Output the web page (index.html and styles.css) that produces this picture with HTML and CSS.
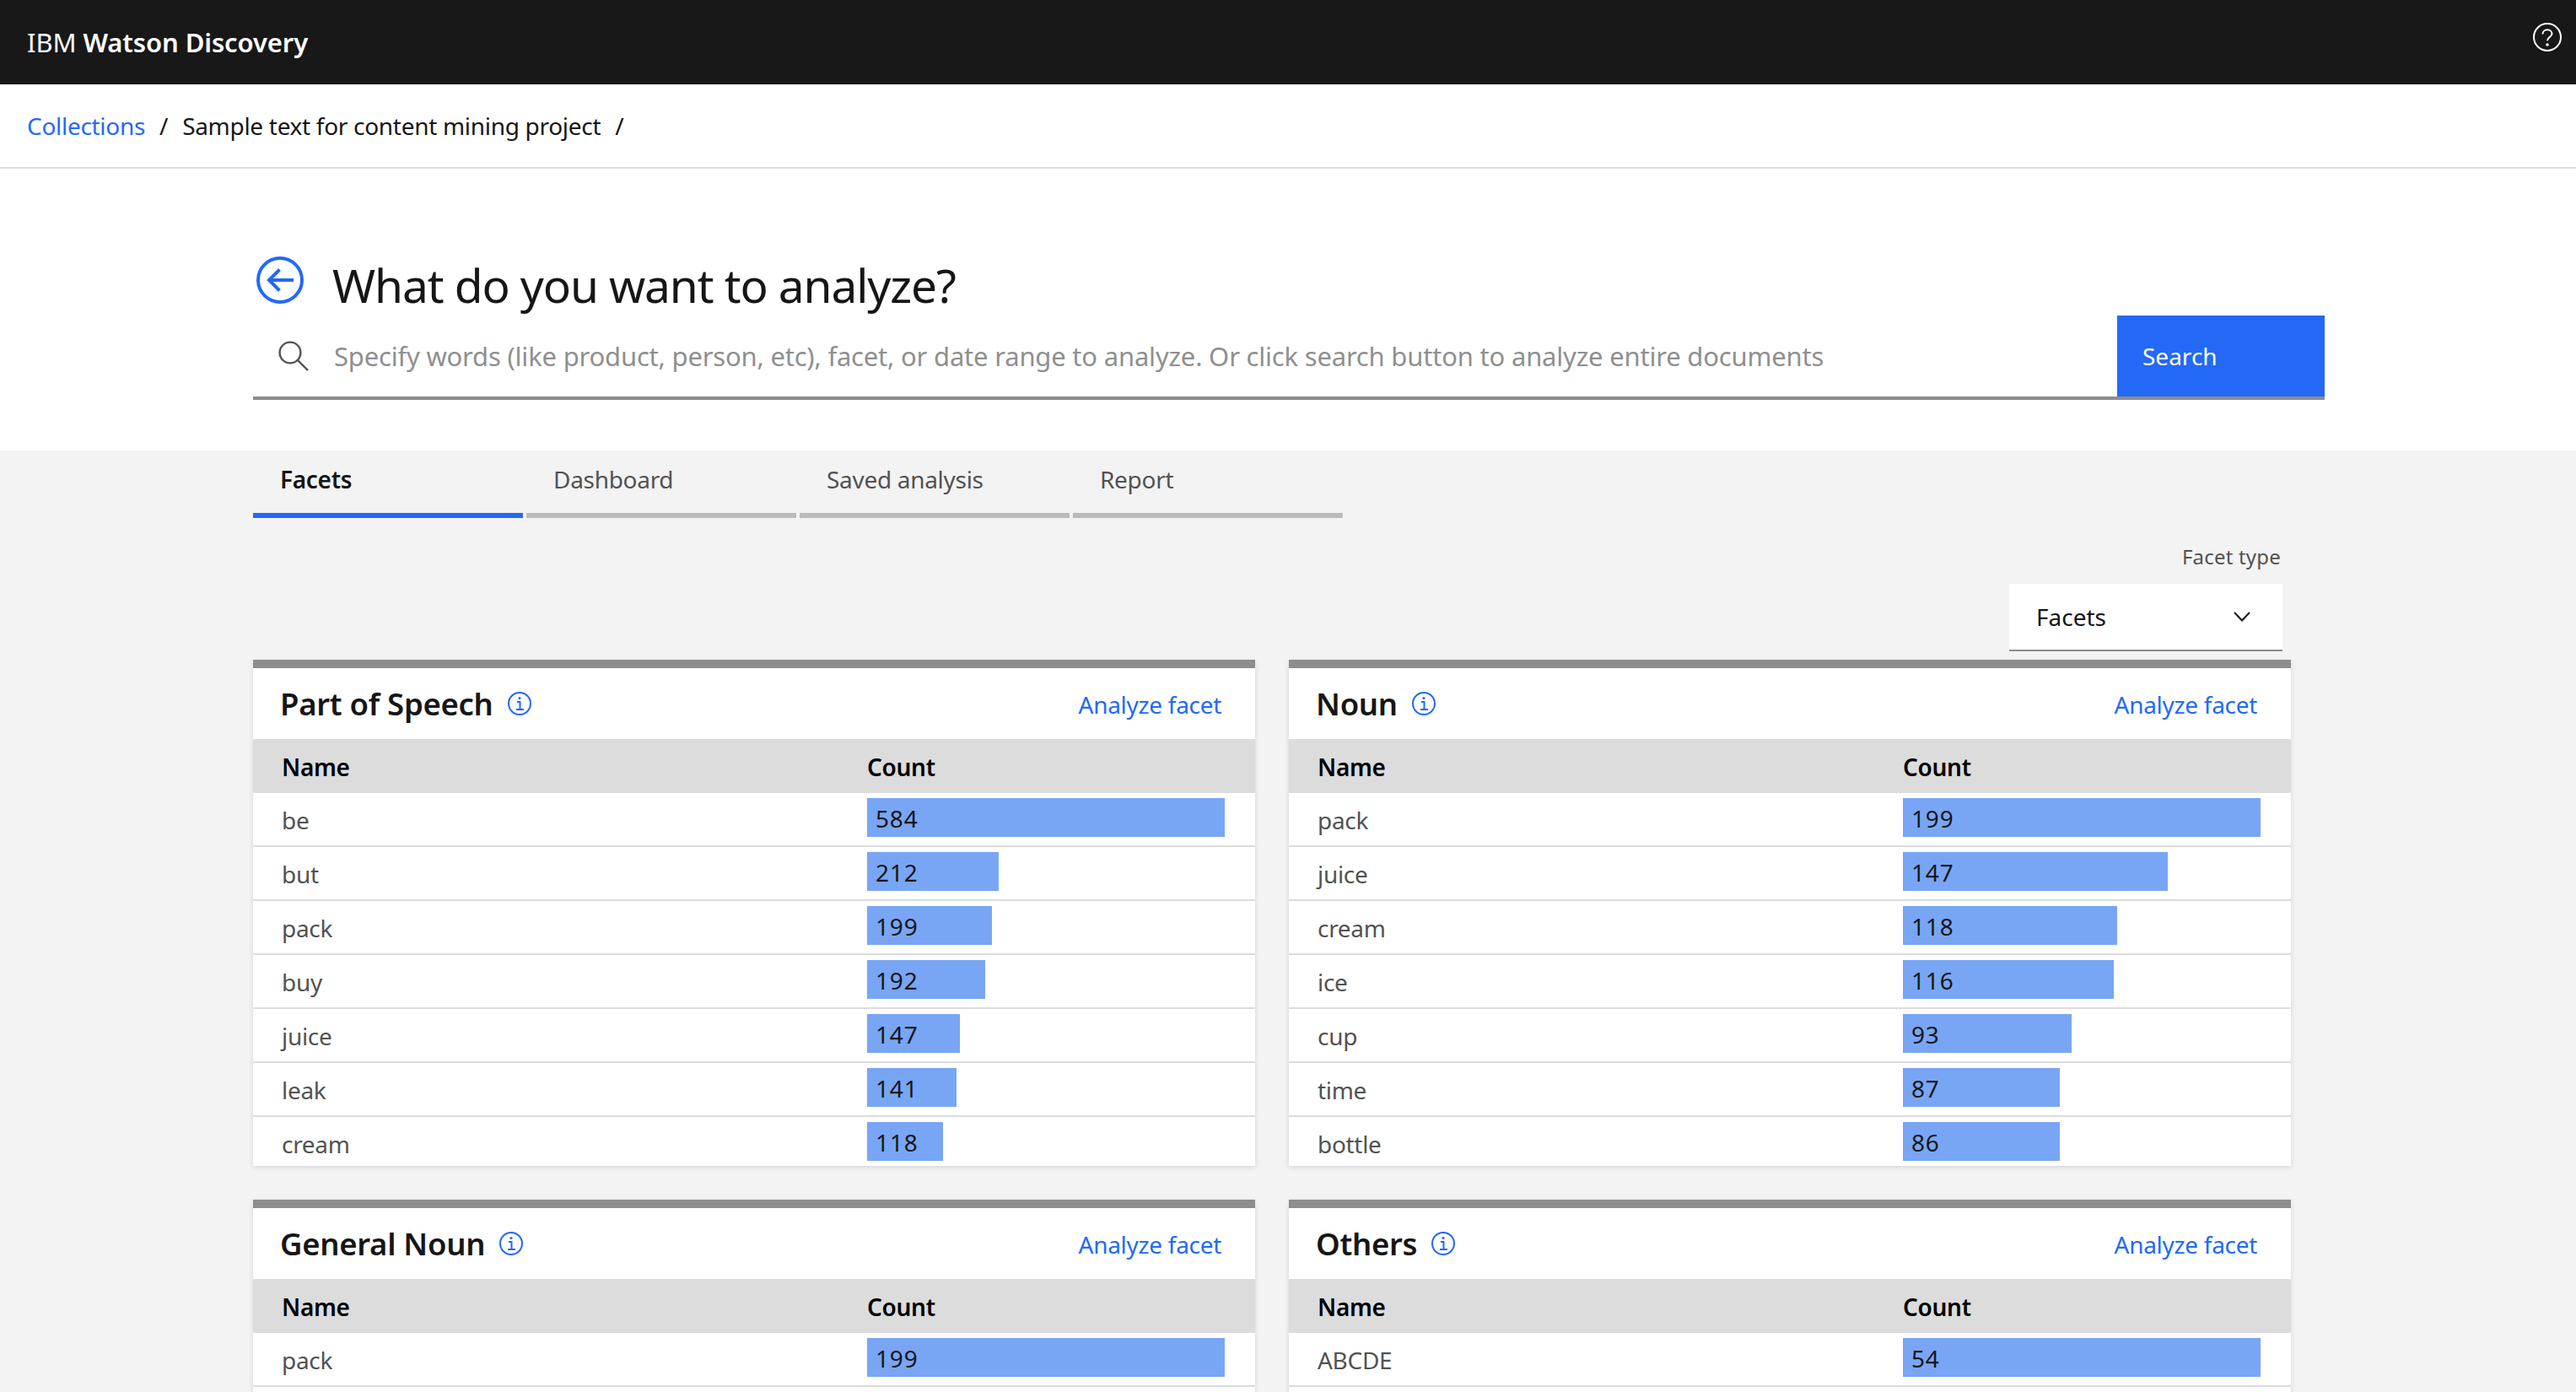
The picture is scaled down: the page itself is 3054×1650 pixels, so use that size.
FILE: index.html
```html
<!DOCTYPE html>
<html lang="en">
<head>
    <meta charset="utf-8">
    <title>IBM Watson Discovery</title>
    <link rel="stylesheet" href="styles.css">
</head>
<body>
<div class="topbar">
    <div class="brand">IBM <b>Watson Discovery</b></div>
    <svg class="help" width="36" height="36" viewBox="0 0 36 36" fill="none" stroke="#fff" stroke-width="2">
        <circle cx="18" cy="18" r="16"/>
        <path d="M12.5 14.5c0-3.2 2.4-5.2 5.5-5.2s5.5 2 5.5 4.8c0 4-5.5 3.6-5.5 8.2"/>
        <circle cx="18" cy="27" r="1.8" fill="#fff" stroke="none"/>
    </svg>
</div>
<div class="crumbs">
    <a href="#">Collections</a><span class="sep">/</span><span>Sample text for content mining project</span><span class="sep">/</span>
</div>
<div class="hero">
    <div class="title_row">
        <svg width="56" height="56" viewBox="0 0 56 56" fill="none" stroke="#2369f6" stroke-width="4">
            <circle cx="28" cy="28" r="26"/>
            <path d="M44 28H15M27.5 15.5L15 28l12.5 12.5"/>
        </svg>
        <h1>What do you want to analyze?</h1>
    </div>
    <div class="search">
        <svg class="search_icon" width="36" height="36" viewBox="0 0 36 36" fill="none" stroke="#525252" stroke-width="2.4">
            <circle cx="14" cy="14" r="12.4"/>
            <path d="M23 23l12 12"/>
        </svg>
        <span class="placeholder">Specify words (like product, person, etc), facet, or date range to analyze. Or click search button to analyze entire documents</span>
        <div class="search_btn">Search</div>
    </div>
</div>
<div class="main">
    <div class="tabs">
        <div class="tab active">Facets</div>
        <div class="tab">Dashboard</div>
        <div class="tab">Saved analysis</div>
        <div class="tab">Report</div>
    </div>
    <div class="filter">
        <div class="filter_label">Facet type</div>
        <div class="select">
            <span>Facets</span>
            <svg width="20" height="12" viewBox="0 0 20 12" fill="none" stroke="#161616" stroke-width="2"><path d="M1 1l9 9.5L19 1"/></svg>
        </div>
    </div>
    <div class="cards">

        <div class="card">
            <div class="card_head">
                <h2>Part of Speech</h2>
                <svg class="info" width="30" height="30" viewBox="0 0 30 30" fill="none" stroke="#2369f6" stroke-width="2"><circle cx="15" cy="15" r="13"/><path d="M12 13h3.5v9M11 22h9"/><circle cx="15" cy="8.5" r="1.6" fill="#2369f6" stroke="none"/></svg>
                <a class="analyze" href="#">Analyze facet</a>
            </div>
            <div class="row thead"><div class="name">Name</div><div>Count</div></div>
            <div class="row"><div class="name">be</div><div class="bar" style="width:424px">584</div></div>
            <div class="row"><div class="name">but</div><div class="bar" style="width:156px">212</div></div>
            <div class="row"><div class="name">pack</div><div class="bar" style="width:148px">199</div></div>
            <div class="row"><div class="name">buy</div><div class="bar" style="width:140px">192</div></div>
            <div class="row"><div class="name">juice</div><div class="bar" style="width:110px">147</div></div>
            <div class="row"><div class="name">leak</div><div class="bar" style="width:106px">141</div></div>
            <div class="row last"><div class="name">cream</div><div class="bar" style="width:90px">118</div></div>
        </div>

        <div class="card">
            <div class="card_head">
                <h2>Noun</h2>
                <svg class="info" width="30" height="30" viewBox="0 0 30 30" fill="none" stroke="#2369f6" stroke-width="2"><circle cx="15" cy="15" r="13"/><path d="M12 13h3.5v9M11 22h9"/><circle cx="15" cy="8.5" r="1.6" fill="#2369f6" stroke="none"/></svg>
                <a class="analyze" href="#">Analyze facet</a>
            </div>
            <div class="row thead"><div class="name">Name</div><div>Count</div></div>
            <div class="row"><div class="name">pack</div><div class="bar" style="width:424px">199</div></div>
            <div class="row"><div class="name">juice</div><div class="bar" style="width:314px">147</div></div>
            <div class="row"><div class="name">cream</div><div class="bar" style="width:254px">118</div></div>
            <div class="row"><div class="name">ice</div><div class="bar" style="width:250px">116</div></div>
            <div class="row"><div class="name">cup</div><div class="bar" style="width:200px">93</div></div>
            <div class="row"><div class="name">time</div><div class="bar" style="width:186px">87</div></div>
            <div class="row last"><div class="name">bottle</div><div class="bar" style="width:186px">86</div></div>
        </div>

        <div class="card">
            <div class="card_head">
                <h2>General Noun</h2>
                <svg class="info" width="30" height="30" viewBox="0 0 30 30" fill="none" stroke="#2369f6" stroke-width="2"><circle cx="15" cy="15" r="13"/><path d="M12 13h3.5v9M11 22h9"/><circle cx="15" cy="8.5" r="1.6" fill="#2369f6" stroke="none"/></svg>
                <a class="analyze" href="#">Analyze facet</a>
            </div>
            <div class="row thead"><div class="name">Name</div><div>Count</div></div>
            <div class="row"><div class="name">pack</div><div class="bar" style="width:424px">199</div></div>
            <div class="row"></div>
        </div>

        <div class="card">
            <div class="card_head">
                <h2>Others</h2>
                <svg class="info" width="30" height="30" viewBox="0 0 30 30" fill="none" stroke="#2369f6" stroke-width="2"><circle cx="15" cy="15" r="13"/><path d="M12 13h3.5v9M11 22h9"/><circle cx="15" cy="8.5" r="1.6" fill="#2369f6" stroke="none"/></svg>
                <a class="analyze" href="#">Analyze facet</a>
            </div>
            <div class="row thead"><div class="name">Name</div><div>Count</div></div>
            <div class="row"><div class="name">ABCDE</div><div class="bar" style="width:424px">54</div></div>
            <div class="row"></div>
        </div>

    </div>
</div>
</body>
</html>
```

FILE: styles.css
```css
html, body{
    margin: 0;
    height: 1650px;
    overflow: hidden;
}
body{
    background-color: #fff;
    color: #161616;
    font-family: "Noto Sans", "Open Sans", sans-serif;
    font-size: 28px;
    letter-spacing: -.3px;
}
a{
    color: #2369f6;
    text-decoration: none;
}

.topbar{
    height: 100px;
    background-color: #181818;
    color: #fff;
    display: flex;
    align-items: center;
    justify-content: space-between;
    padding: 0 16px 0 32px;
}
.brand{
    font-size: 31px;
    letter-spacing: -.1px;
}
.brand b{
    font-weight: 600;
}
.help{
    margin-bottom: 12px;
}

.crumbs{
    height: 98px;
    border-bottom: 2px solid #dcdcdc;
    display: flex;
    align-items: center;
    padding-left: 32px;
}
.sep{
    margin: 0 17px;
}

.hero{
    height: 334px;
    padding: 104px 298px 0 300px;
    box-sizing: border-box;
}
.title_row{
    height: 70px;
    display: flex;
    align-items: flex-start;
    gap: 34px;
    padding-left: 4px;
}
h1{
    margin: 0;
    font-size: 55px;
    font-weight: 400;
    line-height: 68px;
    letter-spacing: -1.1px;
}
.search{
    height: 100px;
    box-sizing: border-box;
    border-bottom: 4px solid #8d8d8d;
    display: flex;
    align-items: center;
    padding-left: 30px;
}
.search_icon{
    flex: none;
    margin-right: 30px;
}
.placeholder{
    flex: 1;
    color: #8f8f8f;
    font-size: 31px;
    letter-spacing: -.2px;
    white-space: nowrap;
}
.search_btn{
    flex: none;
    width: 246px;
    height: 96px;
    box-sizing: border-box;
    background-color: #2369f6;
    color: #fff;
    line-height: 96px;
    padding-left: 30px;
    letter-spacing: 0;
}

.main{
    background-color: #f3f3f3;
    padding: 0 338px 0 300px;
    height: 1116px;
    overflow: hidden;
}
.tabs{
    display: flex;
    gap: 4px;
}
.tab{
    width: 320px;
    height: 80px;
    box-sizing: border-box;
    border-bottom: 6px solid #bbb;
    padding-left: 32px;
    line-height: 68px;
    color: #525252;
}
.tab.active{
    border-bottom-color: #2369f6;
    color: #161616;
    font-weight: 600;
}

.filter{
    display: flex;
    flex-direction: column;
    align-items: flex-end;
    padding: 30px 10px 10px 0;
}
.filter_label{
    font-size: 24px;
    line-height: 32px;
    letter-spacing: .2px;
    color: #525252;
    margin: 0 2px 16px 0;
}
.select{
    width: 324px;
    height: 80px;
    box-sizing: border-box;
    background-color: #fff;
    border-bottom: 2px solid #8d8d8d;
    display: flex;
    align-items: center;
    justify-content: space-between;
    padding: 0 38px 0 32px;
    letter-spacing: 0;
}

.cards{
    display: grid;
    grid-template-columns: 1188px 1188px;
    gap: 40px;
}
.card{
    background-color: #fff;
    border-top: 10px solid #8d8d8d;
    box-shadow: 0 2px 6px rgba(0,0,0,.12);
}
.card_head{
    height: 84px;
    display: flex;
    align-items: center;
    gap: 16px;
    padding: 0 40px 0 32px;
}
h2{
    margin: 0;
    font-size: 36.5px;
    font-weight: 600;
}
.analyze{
    margin-left: auto;
    padding-top: 2px;
}

.row{
    display: flex;
    height: 64px;
    box-sizing: border-box;
    border-bottom: 2px solid #dcdcdc;
}
.row.last{
    height: 58px;
    border-bottom: 0;
}
.row.thead{
    background-color: #dcdcdc;
    border-bottom: 0;
    line-height: 66px;
    font-weight: 600;
    color: #000;
}
.name{
    flex: none;
    width: 728px;
    box-sizing: border-box;
    padding-left: 34px;
    line-height: 64px;
    color: #525252;
}
.thead .name{
    line-height: 66px;
    color: #000;
}
.bar{
    height: 46px;
    margin-top: 6px;
    padding-left: 10px;
    box-sizing: border-box;
    background-color: #78a6f5;
    line-height: 48px;
    letter-spacing: .8px;
}
```
